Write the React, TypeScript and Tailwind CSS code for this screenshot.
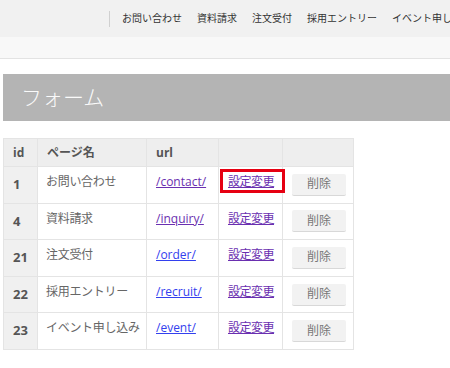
const NAV = ['お問い合わせ', '資料請求', '注文受付', '採用エントリー', 'イベント申し込み'];

const ROWS = [
  { id: 1, name: 'お問い合わせ', url: '/contact/', visited: true, marked: true },
  { id: 4, name: '資料請求', url: '/inquiry/', visited: true, marked: false },
  { id: 21, name: '注文受付', url: '/order/', visited: false, marked: false },
  { id: 22, name: '採用エントリー', url: '/recruit/', visited: false, marked: false },
  { id: 23, name: 'イベント申し込み', url: '/event/', visited: false, marked: false },
];

export default function App() {
  return (
    <div
      className="w-[450px] h-[368px] overflow-hidden bg-white text-[#555]"
      style={{ fontFamily: '"Open Sans", "Noto Sans CJK JP", sans-serif' }}
    >
      {/* top nav */}
      <div className="h-[37px] bg-[#f1f1f1] flex items-center pl-[109px] overflow-hidden">
        <div className="w-px h-[16px] bg-[#d0d0d0] shrink-0" />
        <div className="flex gap-[15px] ml-[12px] text-[10px] text-[#333] whitespace-nowrap">
          {NAV.map((n) => (
            <span key={n}>{n}</span>
          ))}
        </div>
      </div>
      <div className="h-[22px] bg-[#f8f8f8] border-b border-[#e3e3e3]" />

      {/* page title */}
      <div className="mt-[15px] ml-[3px] h-[47px] bg-[#b4b4b4] flex items-center pl-[18px]">
        <h1 className="text-[21px] font-light text-[#fafafa]">フォーム</h1>
      </div>

      {/* forms table */}
      <table className="mt-[17px] ml-[3px] w-[350px] border-collapse table-fixed text-[12px]">
        <colgroup>
          <col className="w-[34px]" />
          <col className="w-[109px]" />
          <col className="w-[72px]" />
          <col className="w-[64px]" />
          <col className="w-[71px]" />
        </colgroup>
        <thead>
          <tr className="h-[28px] bg-[#eeeeee] text-left">
            <th className="border border-[#e4e4e4] px-[9px] font-bold">id</th>
            <th className="border border-[#e4e4e4] px-[9px] font-bold">ページ名</th>
            <th className="border border-[#e4e4e4] px-[9px] font-bold">url</th>
            <th className="border border-[#e4e4e4]" />
            <th className="border border-[#e4e4e4]" />
          </tr>
        </thead>
        <tbody>
          {ROWS.map((r) => (
            <tr key={r.id} className="h-[36.6px]">
              <td className="border border-[#e4e4e4] bg-[#f0f0f0] px-[9px] align-middle font-bold text-[13px] text-[#555]">
                {r.id}
              </td>
              <td className="border border-[#e4e4e4] px-[8px] pt-[6px] align-top text-[#666] whitespace-nowrap overflow-hidden tracking-[-0.3px]">
                {r.name}
              </td>
              <td className="border border-[#e4e4e4] px-[9px] pt-[6px] align-top">
                <a
                  href="#"
                  className={`underline ${r.visited ? 'text-[#6a2fb0]' : 'text-[#3340ee]'}`}
                >
                  {r.url}
                </a>
              </td>
              <td className="relative border border-[#e4e4e4] pl-[9px] pt-[6px] align-top">
                <a href="#" className="underline text-[#6a2fb0] whitespace-nowrap tracking-[-0.5px]">
                  設定変更
                </a>
                {r.marked && (
                  <div className="absolute left-[1px] top-[2px] w-[65px] h-[24px] border-[3px] border-[#e60012]" />
                )}
              </td>
              <td className="border border-[#e4e4e4] pl-[9px] align-middle">
                <button className="w-[54px] h-[22px] rounded-[2px] bg-[#f2f2f2] border-b border-[#d8d8d8] text-[#777] text-[12px]">
                  削除
                </button>
              </td>
            </tr>
          ))}
        </tbody>
      </table>
    </div>
  );
}
